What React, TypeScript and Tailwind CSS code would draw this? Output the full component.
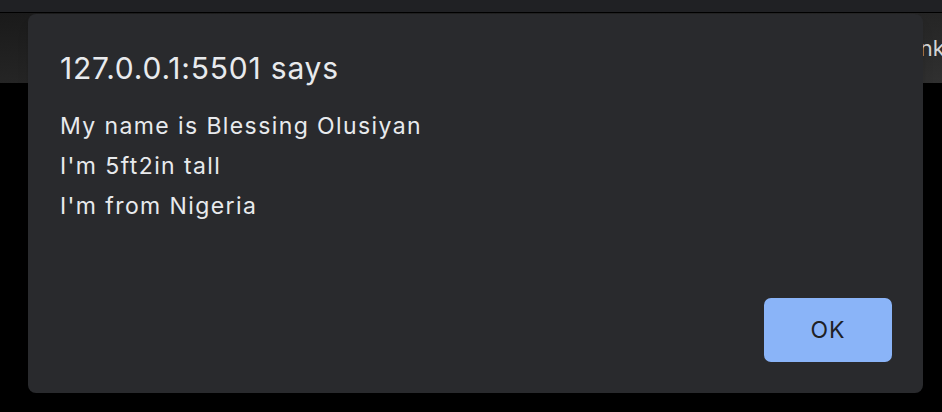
const lines = ["My name is Blessing Olusiyan", "I'm 5ft2in tall", "I'm from Nigeria"];

const App = () => {
    return (
        <div className="relative w-[942px] h-[412px] overflow-hidden bg-black font-['Inter','Noto_Sans',sans-serif]">
            <div className="h-[13px] bg-[#202124] border-b border-black"></div>
            <div className="h-[70px] bg-gradient-to-br from-[#1a1a1a] to-[#303030] flex items-center">
                <span className="pl-[902px] whitespace-nowrap text-[22px] text-[#d4d4d4]">Link</span>
            </div>

            <div className="absolute left-[28px] top-[14px] w-[895px] h-[379px] rounded-[8px] bg-[#292a2d] shadow-lg flex flex-col px-[32px] pt-[35px] pb-[31px]">
                <h1 className="text-[30px] leading-[38px] tracking-[0.8px] text-[#e8eaed]">127.0.0.1:5501 says</h1>
                <div className="mt-[19px] flex flex-col">
                    {lines.map((line) => (
                        <p key={line} className="text-[23px] leading-[40px] tracking-[1.4px] text-[#e8eaed]">{line}</p>
                    ))}
                </div>
                <div className="mt-auto flex justify-end">
                    <button className="w-[128px] h-[64px] rounded-[7px] bg-[#8ab4f8] text-[#202124] text-[23px] tracking-[1px] mr-[-1px]">OK</button>
                </div>
            </div>
        </div>
    );
};

export default App;
